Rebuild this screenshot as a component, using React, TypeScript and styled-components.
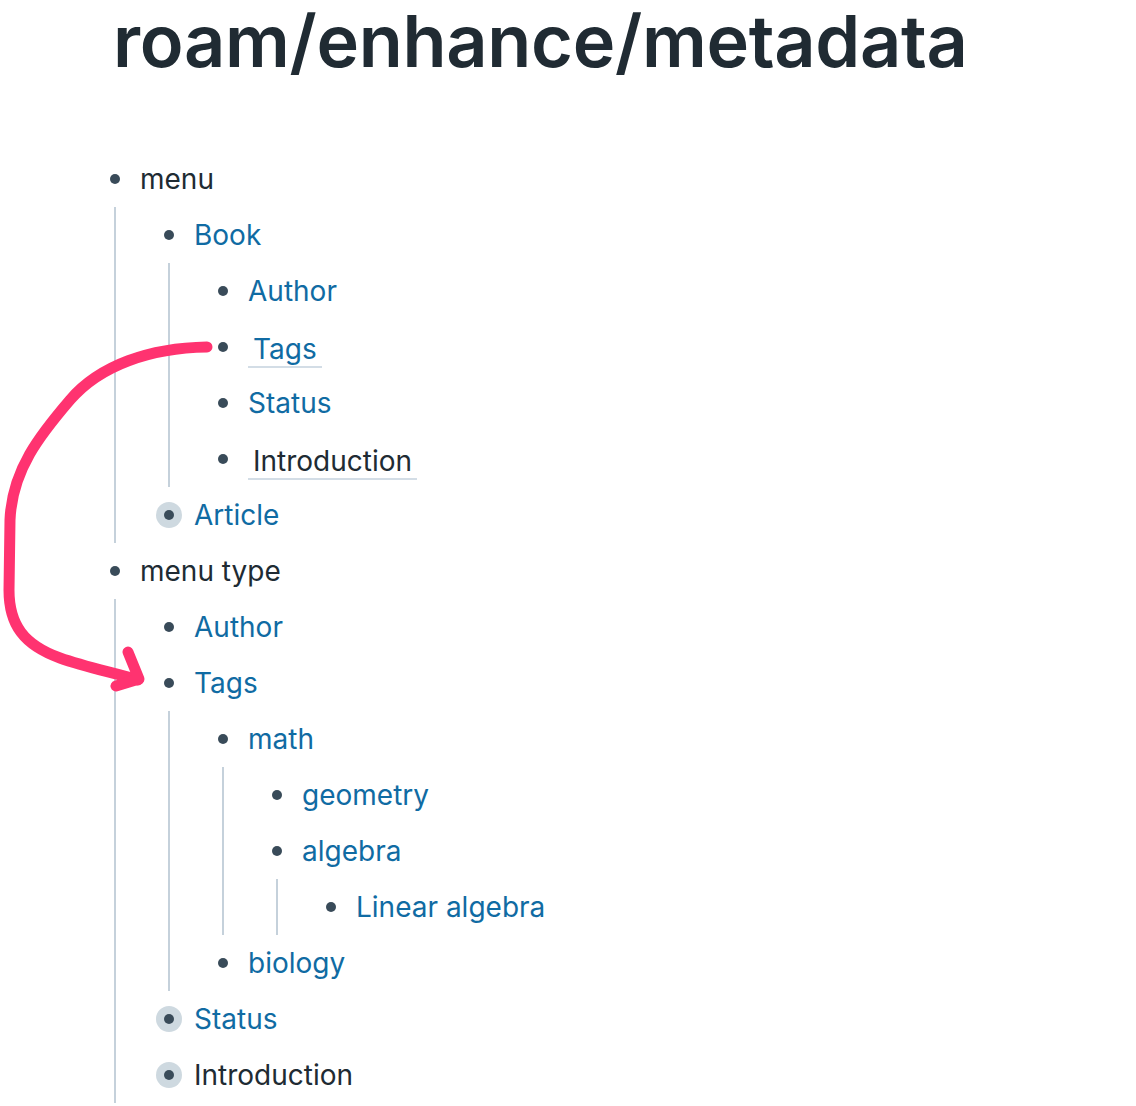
import React from "react";
import styled, { createGlobalStyle } from "styled-components";

const Global = createGlobalStyle`
  html, body { margin: 0; padding: 0; background: #ffffff; }
  body { font-family: Inter, "Noto Sans", sans-serif; color: #202b33; }
`;

const Page = styled.div`
  position: relative;
  width: 1136px;
  height: 1106px;
  overflow: hidden;
  background: #ffffff;
`;

const Title = styled.h1`
  margin: 0;
  padding: 0 0 0 113px;
  height: 151px;
  font-family: Inter, sans-serif;
  font-size: 72px;
  font-weight: 600;
  line-height: 82px;
  letter-spacing: -0.3px;
  color: #202b33;
  white-space: nowrap;
`;

const Tree = styled.div`
  padding-left: 102px;
`;

const Row = styled.div`
  display: flex;
  align-items: center;
  height: 56px;
  gap: 12px;
`;

const BulletBox = styled.span<{ $collapsed?: boolean }>`
  flex: none;
  width: 26px;
  height: 26px;
  border-radius: 50%;
  display: flex;
  align-items: center;
  justify-content: center;
  background: ${(p) => (p.$collapsed ? "#ced9e0" : "transparent")};
  &::after {
    content: "";
    width: 10px;
    height: 10px;
    border-radius: 50%;
    background: #394b59;
  }
`;

const Text = styled.span<{ $link?: boolean; $editing?: boolean }>`
  font-family: Inter, sans-serif;
  font-size: 28px;
  line-height: 34px;
  color: ${(p) => (p.$link ? "#106ba3" : "#202b33")};
  ${(p) =>
    p.$editing
      ? `padding: 0 5px; margin-top: 6px; border-bottom: 2px solid #d3dde6;`
      : ``}
`;

const Children = styled.div`
  margin-left: 12px;
  border-left: 2px solid #c5d1db;
  padding-left: 40px;
`;

const Overlay = styled.svg`
  position: absolute;
  left: 0;
  top: 0;
  pointer-events: none;
`;

type Node = {
  text: string;
  link?: boolean;
  editing?: boolean;
  collapsed?: boolean;
  children?: Node[];
};

const data: Node[] = [
  {
    text: "menu",
    children: [
      {
        text: "Book",
        link: true,
        children: [
          { text: "Author", link: true },
          { text: "Tags", link: true, editing: true },
          { text: "Status", link: true },
          { text: "Introduction", editing: true },
        ],
      },
      { text: "Article", link: true, collapsed: true },
    ],
  },
  {
    text: "menu type",
    children: [
      { text: "Author", link: true },
      {
        text: "Tags",
        link: true,
        children: [
          {
            text: "math",
            link: true,
            children: [
              { text: "geometry", link: true },
              {
                text: "algebra",
                link: true,
                children: [{ text: "Linear algebra", link: true }],
              },
            ],
          },
          { text: "biology", link: true },
        ],
      },
      { text: "Status", link: true, collapsed: true },
      { text: "Introduction", collapsed: true },
    ],
  },
];

const Block: React.FC<{ node: Node }> = ({ node }) => (
  <div>
    <Row>
      <BulletBox $collapsed={node.collapsed} />
      <Text $link={node.link} $editing={node.editing}>
        {node.text}
      </Text>
    </Row>
    {node.children && (
      <Children>
        {node.children.map((c, i) => (
          <Block key={i} node={c} />
        ))}
      </Children>
    )}
  </div>
);

export default function App() {
  return (
    <>
      <Global />
      <Page>
        <Title>roam/enhance/metadata</Title>
        <Tree>
          {data.map((n, i) => (
            <Block key={i} node={n} />
          ))}
        </Tree>
        <Overlay width="1136" height="1106" viewBox="0 0 1136 1106">
          <path
            d="M207 347 C150 348 100 365 70 400 C40 435 12 470 10 520 L9 590 C9 625 24 645 60 658 C85 667 115 673 138 680"
            fill="none"
            stroke="#ff3370"
            strokeWidth="11"
            strokeLinecap="round"
            strokeLinejoin="round"
          />
          <path
            d="M128 652 L139 679 L116 686"
            fill="none"
            stroke="#ff3370"
            strokeWidth="11"
            strokeLinecap="round"
            strokeLinejoin="round"
          />
        </Overlay>
      </Page>
    </>
  );
}
